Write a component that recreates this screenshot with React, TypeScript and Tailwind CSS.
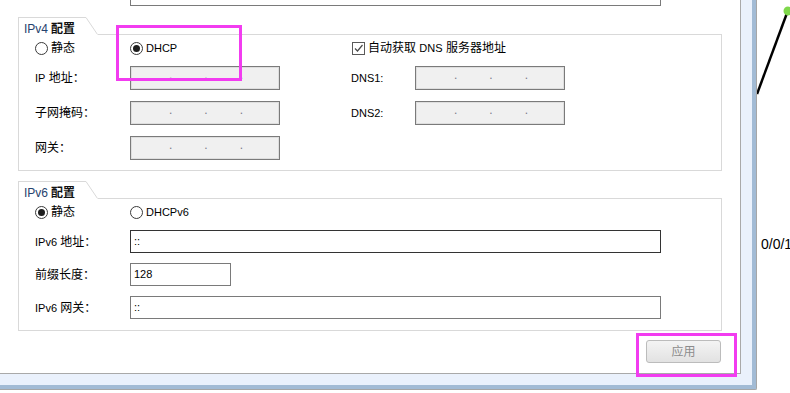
import React from "react";

function Radio({ checked, label, latin }: { checked?: boolean; label: string; latin?: boolean }) {
  return (
    <span className="flex items-center gap-[3px]">
      <span className="flex h-[13px] w-[13px] shrink-0 items-center justify-center rounded-full border border-[#3a3a3a] bg-white">
        {checked && <span className="h-[7px] w-[7px] rounded-full bg-[#1e1e1e]" />}
      </span>
      <span className={latin ? "text-[11px]" : "text-[12px]"}>{label}</span>
    </span>
  );
}

function Checkbox({ label }: { label: React.ReactNode }) {
  return (
    <span className="flex items-center gap-[3px]">
      <span className="flex h-[13px] w-[13px] shrink-0 items-center justify-center border border-[#5a5a5a] bg-white">
        <svg width="11" height="11" viewBox="0 0 11 11">
          <path d="M2 5.5 L4.5 8 L9.5 2" fill="none" stroke="#4a4a4a" strokeWidth="1.2" />
        </svg>
      </span>
      <span className="text-[12px]">{label}</span>
    </span>
  );
}

function IpField() {
  return (
    <div className="flex h-[24px] w-[150px] shrink-0 items-center gap-[32px] border border-[#7a7a7a] bg-[#f0f0f0] pl-[38px] text-[12px] leading-none text-[#7a7a8a] shadow-[inset_0_0_0_1px_#dedede]">
      <span className="-translate-y-[3px]">.</span>
      <span className="-translate-y-[3px]">.</span>
      <span className="-translate-y-[3px]">.</span>
    </div>
  );
}

function Group({ title, children }: { title: string; children: React.ReactNode }) {
  return (
    <div className="ml-[18px] w-[704px]">
      <div className="flex h-[18px]">
        <div className="flex h-full w-[68px] shrink-0 items-center border-l border-t border-[#d9d9d9] pl-[5px] pt-[4px] text-[12px] leading-none">
          <span className="text-[12px] text-[#26436e]">{title}</span>
          <span className="ml-[3px] font-bold text-[#111]">配置</span>
        </div>
        <svg width="12" height="18" className="shrink-0">
          <line x1="0" y1="0.5" x2="11.5" y2="17.5" stroke="#d9d9d9" strokeWidth="1" />
        </svg>
        <div className="flex-1 border-b border-[#d9d9d9]" />
      </div>
      <div className="border-x border-b border-[#d9d9d9]">{children}</div>
    </div>
  );
}

export default function App() {
  return (
    <div className="flex h-[393px] w-[790px] overflow-hidden bg-white font-['Liberation_Sans','Noto_Sans_CJK_SC',sans-serif] text-[12px] text-black">
      <div className="relative h-[390px] w-[757px] shrink-0 rounded-br-[2px] border-b border-r border-[#a6a6a6] bg-[#a2bbd5] pb-[4px] pr-[4px]">
        <div className="h-full bg-[#eaf1fc] pb-[11px] pr-[11px]">
          <div className="flex h-full flex-col border-b border-r border-[#a9a9a9] bg-white">
            <div className="ml-[130px] h-[6px] w-[531px] shrink-0 border-x border-b border-[#7a7a7a]" />

            <div className="mt-[11px]">
              <Group title="IPv4">
                <div className="pb-[10px] pt-[5px]">
                  <div className="flex h-[16px] items-center pl-[16px]">
                    <div className="w-[95px] shrink-0">
                      <Radio label="静态" />
                    </div>
                    <div className="w-[222px] shrink-0">
                      <Radio checked latin label="DHCP" />
                    </div>
                    <Checkbox
                      label={
                        <>
                          自动获取 <span className="text-[11px]">DNS</span> 服务器地址
                        </>
                      }
                    />
                  </div>
                  <div className="mt-[10px] flex flex-col gap-[11px]">
                    <div className="flex h-[24px] items-center pl-[16px]">
                      <span className="w-[95px] shrink-0">
                        <span className="text-[11px]">IP</span> 地址：
                      </span>
                      <IpField />
                      <span className="ml-[71px] w-[64px] shrink-0 text-[11px]">DNS1:</span>
                      <IpField />
                    </div>
                    <div className="flex h-[24px] items-center pl-[16px]">
                      <span className="w-[95px] shrink-0">子网掩码：</span>
                      <IpField />
                      <span className="ml-[71px] w-[64px] shrink-0 text-[11px]">DNS2:</span>
                      <IpField />
                    </div>
                    <div className="flex h-[24px] items-center pl-[16px]">
                      <span className="w-[95px] shrink-0">网关：</span>
                      <IpField />
                    </div>
                  </div>
                </div>
              </Group>
            </div>

            <div className="mt-[10px]">
              <Group title="IPv6">
                <div className="pb-[11px] pt-[5px]">
                  <div className="flex h-[16px] items-center pl-[16px]">
                    <div className="w-[95px] shrink-0">
                      <Radio checked label="静态" />
                    </div>
                    <Radio latin label="DHCPv6" />
                  </div>
                  <div className="mt-[10px] flex flex-col gap-[10px]">
                    <div className="flex h-[23px] items-center pl-[16px]">
                      <span className="w-[95px] shrink-0">
                        <span className="text-[11px]">IPv6</span> 地址：
                      </span>
                      <div className="flex h-[23px] w-[531px] shrink-0 items-center border border-[#333] bg-white pl-[3px] text-[11px]">
                        ::
                      </div>
                    </div>
                    <div className="flex h-[23px] items-center pl-[16px]">
                      <span className="w-[95px] shrink-0">前缀长度：</span>
                      <div className="flex h-[23px] w-[101px] shrink-0 items-center border border-[#7a7a7a] bg-white pl-[3px] text-[11px]">
                        128
                      </div>
                    </div>
                    <div className="flex h-[23px] items-center pl-[16px]">
                      <span className="w-[95px] shrink-0">
                        <span className="text-[11px]">IPv6</span> 网关：
                      </span>
                      <div className="flex h-[23px] w-[531px] shrink-0 items-center border border-[#7a7a7a] bg-white pl-[3px] text-[11px]">
                        ::
                      </div>
                    </div>
                  </div>
                </div>
              </Group>
            </div>

            <button className="ml-[646px] mt-[9px] flex h-[23px] w-[75px] shrink-0 items-center justify-center rounded-[3px] border border-[#bcbcbc] bg-gradient-to-b from-[#f4f4f4] to-[#e2e2e2] text-[12px] text-[#8c8c8c]">
              应用
            </button>
          </div>
        </div>

        <div className="pointer-events-none absolute left-[116px] top-[25px] h-[56px] w-[126px] border-[3px] border-[#f23cf0]" />
        <div className="pointer-events-none absolute left-[636px] top-[333px] h-[44px] w-[101px] border-[3px] border-[#f23cf0]" />
      </div>

      <div className="relative h-full flex-1">
        <svg className="absolute inset-0" width="33" height="393">
          <line x1="0" y1="94" x2="30" y2="13" stroke="#000" strokeWidth="2.5" />
          <circle cx="31" cy="11" r="4.5" fill="#7fd84b" />
        </svg>
        <span className="absolute left-[4px] top-[237px] whitespace-nowrap text-[14px] leading-none">0/0/1</span>
      </div>
    </div>
  );
}
